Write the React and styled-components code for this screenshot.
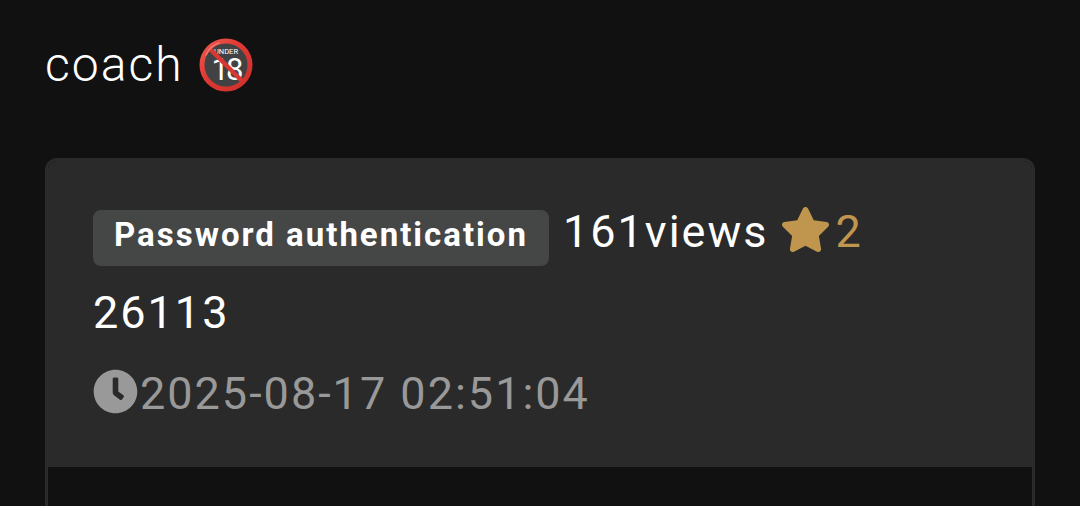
import styled, { createGlobalStyle } from "styled-components"
import { FaStar, FaClock } from "react-icons/fa"

const GlobalStyle = createGlobalStyle`
    * {
        box-sizing: border-box;
    }

    body {
        margin: 0;
        background: #111111;
        color: #ffffff;
        font-family: Roboto, sans-serif;
        letter-spacing: 2px;
    }
`

export default function App() {
    return (
        <>
            <GlobalStyle />
            <Main>
                <Title>
                    coach
                    <Under18 />
                </Title>

                <Card>
                    <CardHeader>
                        <Row>
                            <Badge>Password authentication</Badge>
                            <Views>161views</Views>
                            <Stars>
                                <Icon as={FaStar} $width={51} />
                                2
                            </Stars>
                        </Row>
                        <Row>26113</Row>
                        <DateRow>
                            <Icon as={FaClock} $width={45} />
                            <time dateTime="2025-08-17T02:51:04">2025-08-17 02:51:04</time>
                        </DateRow>
                    </CardHeader>
                </Card>
            </Main>
        </>
    )
}

const Under18 = () => (
    <Emoji viewBox="0 0 54 54" role="img" aria-label="Under 18">
        <defs>
            <linearGradient id="ring" x1="0" y1="0" x2="1" y2="1">
                <stop offset="0" stopColor="#ee5a50" />
                <stop offset=".4" stopColor="#e03a34" />
                <stop offset="1" stopColor="#cc302c" />
            </linearGradient>
        </defs>
        <circle cx="27" cy="27" r="25" fill="#424244" />
        <text x="27" y="16" fontSize="7.5" fontWeight="400" letterSpacing="0" textAnchor="middle" fill="#fff">UNDER</text>
        <text x="27" y="42" fontSize="31" fontWeight="400" letterSpacing="-3" textAnchor="middle" fill="#fff">18</text>
        <path d="M9 9L45 45" stroke="#d93832" strokeWidth="4.5" />
        <circle cx="27" cy="27" r="24" fill="none" stroke="url(#ring)" strokeWidth="5" />
        <path d="M7 17Q11 8 20 5" fill="none" stroke="#f58a7e" strokeWidth="1.5" strokeLinecap="round" opacity=".7" />
    </Emoji>
)

const Main = styled.main`
    display: flex;
    flex-direction: column;
    min-height: 100vh;
    padding: 32px 45px 0;
`

const Title = styled.h1`
    display: flex;
    align-items: center;
    gap: 15px;
    margin: 0 0 60px;
    font-size: 48px;
    font-weight: 300;
    line-height: 66px;
`

const Emoji = styled.svg`
    width: 54px;
    height: 54px;
`

const Card = styled.section`
    flex: 1;
    border: 3px solid #2a2a2a;
    border-bottom: 0;
    border-radius: 12px 12px 0 0;
`

const CardHeader = styled.header`
    padding: 30px 45px 33px;
    background: #2a2a2a;
    border-radius: 9px 9px 0 0;
    font-size: 45px;
    line-height: 81px;
`

const Row = styled.div`
    display: flex;
    align-items: center;
`

const Badge = styled.span`
    margin: 12px 14px 0 0;
    padding: 0 21px 6px;
    border-radius: 8px;
    background: #444746;
    font-size: 33px;
    font-weight: 700;
    line-height: 50px;
`

const Views = styled.span`
    margin-right: 12px;
`

const Stars = styled.span`
    display: flex;
    align-items: center;
    gap: 4px;
    color: #c0964f;
`

const Icon = styled.svg`
    flex: none;
    width: ${props => props.$width}px;
    height: 45px;
    margin-bottom: 4px;
`

const DateRow = styled(Row)`
    gap: 2px;
    color: #999999;
`
